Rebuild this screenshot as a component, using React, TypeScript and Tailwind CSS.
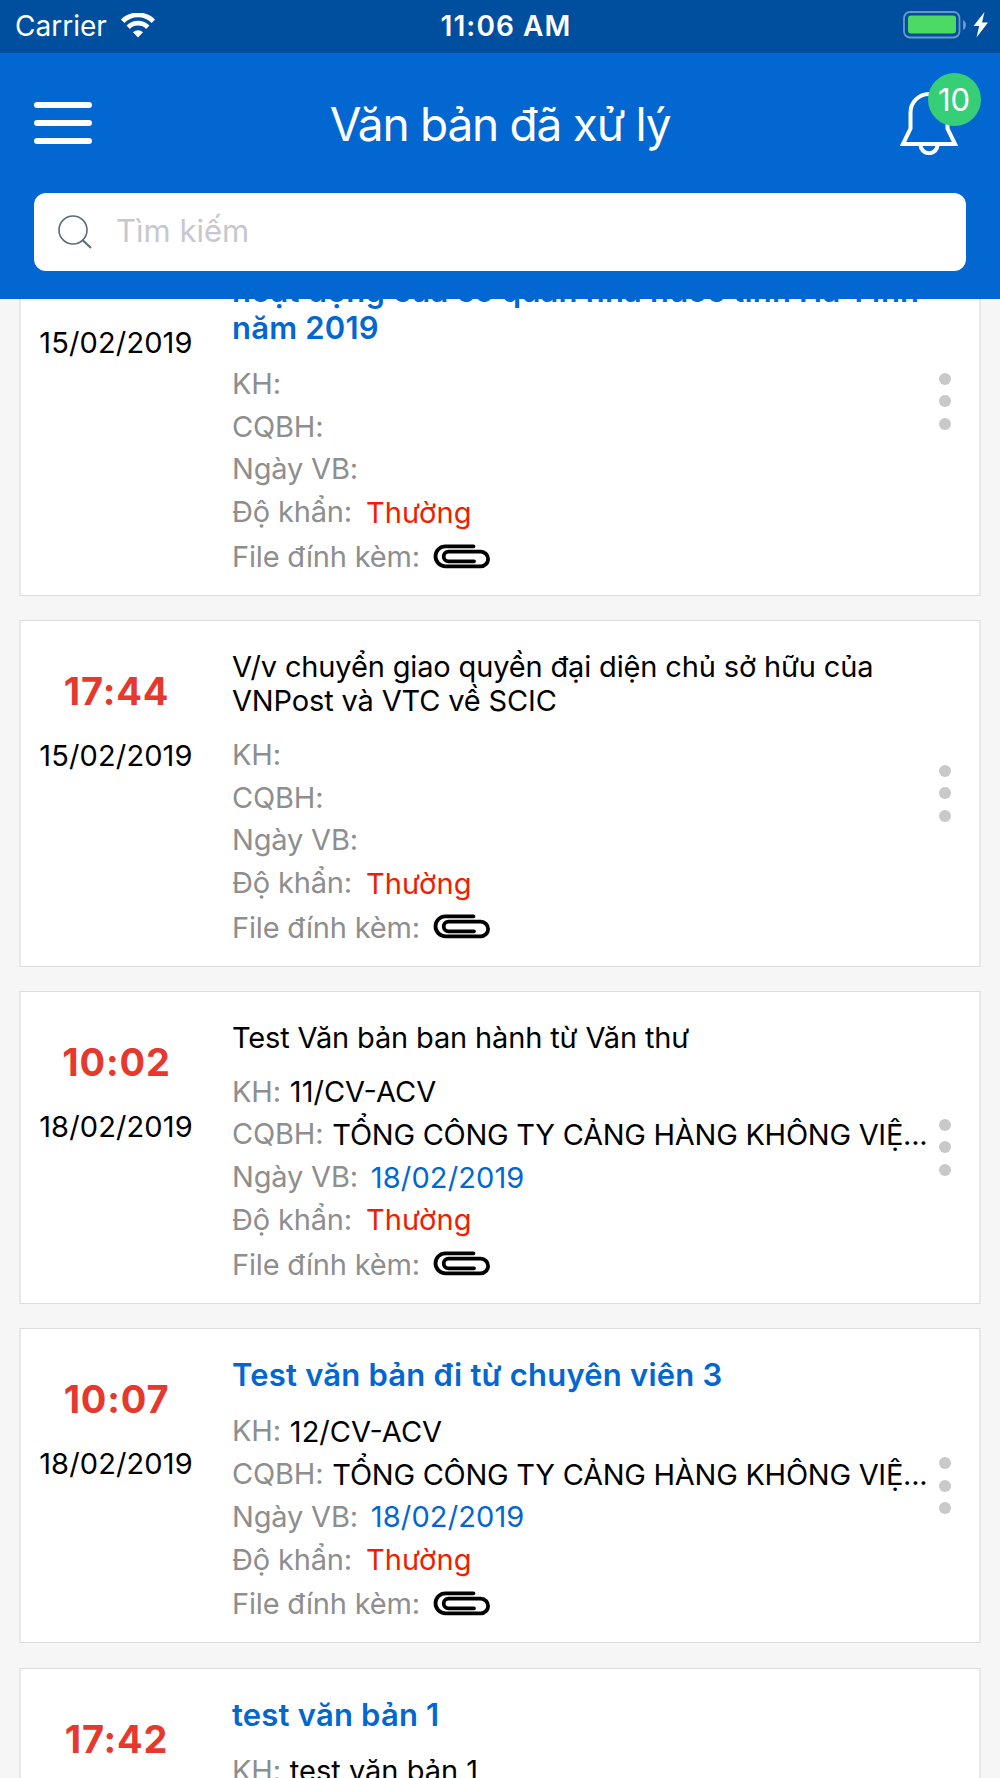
import { useState } from 'react';

interface DocumentItem {
  id: number;
  time: string;
  date: string;
  title: string[];
  unread: boolean;
  code?: string;
  org?: string;
  issued?: string;
  urgency: string;
}

const DOCUMENTS: DocumentItem[] = [
  {
    id: 1,
    time: '17:43',
    date: '15/02/2019',
    title: ['V/v ứng dụng công nghệ thông tin trong', 'hoạt động của cơ quan nhà nước tỉnh Hà Tĩnh', 'năm 2019'],
    unread: true,
    urgency: 'Thường',
  },
  {
    id: 2,
    time: '17:44',
    date: '15/02/2019',
    title: ['V/v chuyển giao quyền đại diện chủ sở hữu của', 'VNPost và VTC về SCIC'],
    unread: false,
    urgency: 'Thường',
  },
  {
    id: 3,
    time: '10:02',
    date: '18/02/2019',
    title: ['Test Văn bản ban hành từ Văn thư'],
    unread: false,
    code: '11/CV-ACV',
    org: 'TỔNG CÔNG TY CẢNG HÀNG KHÔNG VIỆ...',
    issued: '18/02/2019',
    urgency: 'Thường',
  },
  {
    id: 4,
    time: '10:07',
    date: '18/02/2019',
    title: ['Test văn bản đi từ chuyên viên 3'],
    unread: true,
    code: '12/CV-ACV',
    org: 'TỔNG CÔNG TY CẢNG HÀNG KHÔNG VIỆ...',
    issued: '18/02/2019',
    urgency: 'Thường',
  },
  {
    id: 5,
    time: '17:42',
    date: '18/02/2019',
    title: ['test văn bản 1'],
    unread: true,
    code: 'test văn bản 1',
    urgency: 'Thường',
  },
];

function WifiIcon() {
  return (
    <svg width="34" height="25" viewBox="0 0 34 25" fill="none" stroke="#fff">
      <path d="M1.6 8.2a22 22 0 0 1 30.8 0" strokeWidth="4.8" />
      <path d="M7.2 14.2a14 14 0 0 1 19.6 0" strokeWidth="4.8" />
      <path d="M17 24.5l-5-5.2a7.2 7.2 0 0 1 10 0z" fill="#fff" stroke="none" />
    </svg>
  );
}

function BatteryIcon() {
  return (
    <svg width="86" height="28" viewBox="0 0 86 28" fill="none">
      <rect x="1" y="1" width="55.5" height="25.5" rx="6" stroke="#6a97c6" strokeWidth="1.8" />
      <rect x="5" y="4.5" width="48" height="18" rx="3" fill="#4cd964" />
      <path d="M60 9q3 1.5 3 5t-3 5z" fill="#6a97c6" />
      <path d="M81.5 1L70.5 15h5.7L73.5 26.5 85 11.5h-6z" fill="#fff" />
    </svg>
  );
}

function BellIcon() {
  return (
    <svg width="58" height="64" viewBox="0 0 58 64" fill="none" stroke="#fff" strokeWidth="4">
      <path d="M3 53h52l-7.5-15.5V21.5a18.5 18.5 0 0 0-37 0V37.5z" />
      <path d="M20.5 54a8.5 8.2 0 0 0 17 0" />
    </svg>
  );
}

function PaperclipIcon() {
  return (
    <svg width="58" height="26" viewBox="0 0 58 26" fill="none" stroke="#000" strokeWidth="3.8" strokeLinecap="round">
      <path d="M40.5 3.3H12.5a10 10 0 0 0 0 20h35.3a7.3 7.3 0 0 0 0-14.6H15.5a4.8 4.8 0 0 0 0 9.6h25.5" />
    </svg>
  );
}

function StatusBar() {
  return (
    <div className="h-[53px] bg-[#004f9e] grid grid-cols-3 items-center pl-[15px] pr-[11px] pb-[3px] text-white">
      <div className="flex items-center gap-3.5">
        <span className="text-[28px] leading-none pt-0.5">Carrier</span>
        <WifiIcon />
      </div>
      <div className="pl-2 text-center text-[28px] leading-none font-semibold tracking-[1.1px] pt-0.5">11:06 AM</div>
      <div className="flex justify-end">
        <BatteryIcon />
      </div>
    </div>
  );
}

function Header() {
  const [query, setQuery] = useState('');

  return (
    <header className="relative z-10 h-[299px] bg-[#0267d0]">
      <StatusBar />

      <div className="h-[140px] px-[34px] flex items-center justify-between text-white">
        <button className="w-[66px] flex flex-col gap-3">
          <span className="w-[58px] h-1.5 rounded-full bg-white" />
          <span className="w-[58px] h-1.5 rounded-full bg-white" />
          <span className="w-[58px] h-1.5 rounded-full bg-white" />
        </button>
        <h1 className="pt-px text-[46px] leading-none tracking-[-1.25px]">Văn bản đã xử lý</h1>
        <button className="relative w-[66px]">
          <BellIcon />
          <span className="absolute -top-[18px] left-[28px] size-[53px] rounded-full bg-[#36cf77] flex items-center justify-center pr-px text-[31px] leading-none">
            10
          </span>
        </button>
      </div>

      <div className="mx-[34px] h-[78px] rounded-xl bg-white flex items-center pl-6">
        <svg width="34" height="34" viewBox="0 0 34 34" fill="none" stroke="#5b6b7a" strokeWidth="1.6">
          <circle cx="15" cy="15" r="14" />
          <path d="M24.5 25l8.5 8" strokeWidth="2" />
        </svg>
        <input
          value={query}
          onChange={(e) => setQuery(e.target.value)}
          placeholder="Tìm kiếm"
          className="ml-6 mb-px flex-1 text-[31px] text-black placeholder:text-[#c7c7cd] focus:outline-none"
        />
      </div>
    </header>
  );
}

interface FieldProps {
  label: string;
  value?: string;
  valueClass: string;
}

function Field({ label, value, valueClass }: FieldProps) {
  return (
    <div className="h-[42.75px] flex items-center whitespace-nowrap">
      <span className="text-[#8e8e8e] tracking-[-0.18px]">{label}</span>
      {value && <span className={`pt-px ${valueClass}`}>{value}</span>}
    </div>
  );
}

function DocumentCard({ doc }: { doc: DocumentItem }) {
  return (
    <article className="relative shrink-0 flex bg-white border-x-2 border-y border-x-[#e8e8e8] border-y-[#dedede] pb-[14.9px] text-[29px]">
      {/* Time / date */}
      <div className="w-[191px] pt-[46px] flex flex-col items-center">
        <span className="text-[38px] leading-[48px] font-bold tracking-[0.8px] text-[#e6392e]">{doc.time}</span>
        <span className="mt-[21px] -ml-px leading-10 tracking-[0.12px]">{doc.date}</span>
      </div>

      {/* Details */}
      <div className="ml-5 pt-[28.5px]">
        <h2
          className={
            doc.unread
              ? 'text-[31px] leading-[36.8px] font-semibold tracking-[0.2px] text-[#0267d0]'
              : 'leading-[34px] tracking-[-0.15px]'
          }
        >
          {doc.title.map((line) => (
            <span key={line} className="block whitespace-nowrap">{line}</span>
          ))}
        </h2>
        <div className="mt-[15.4px]">
          <Field label="KH:" value={doc.code} valueClass="ml-[9px]" />
          <Field label="CQBH:" value={doc.org} valueClass="ml-[9px] tracking-[-0.27px]" />
          <Field label="Ngày VB:" value={doc.issued} valueClass="ml-[13px] tracking-[0.12px] text-[#0267d0]" />
          <Field label="Độ khẩn:" value={doc.urgency} valueClass="ml-[14px] tracking-[0.12px] text-[#f01d00]" />
          <div className="h-[46.7px] flex items-center">
            <span className="text-[#8e8e8e] tracking-[-0.18px]">File đính kèm:</span>
            <span className="ml-[13.5px] mb-0.5"><PaperclipIcon /></span>
          </div>
        </div>
      </div>

      {/* More menu */}
      <button className="absolute inset-y-0 right-[28.5px] flex flex-col justify-center gap-[10.7px]">
        <span className="size-3 rounded-full bg-[#c8c9c9]" />
        <span className="size-3 rounded-full bg-[#c8c9c9]" />
        <span className="size-3 rounded-full bg-[#c8c9c9]" />
      </button>
    </article>
  );
}

export default function App() {
  return (
    <div className="w-[1000px] h-[1778px] overflow-hidden bg-[#f6f6f6] text-black font-['Inter',sans-serif]">
      <Header />
      {/* List is scrolled under the header */}
      <main className="-mt-[92px] px-[19px] flex flex-col gap-[24.4px]">
        {DOCUMENTS.map((doc) => (
          <DocumentCard key={doc.id} doc={doc} />
        ))}
      </main>
    </div>
  );
}
